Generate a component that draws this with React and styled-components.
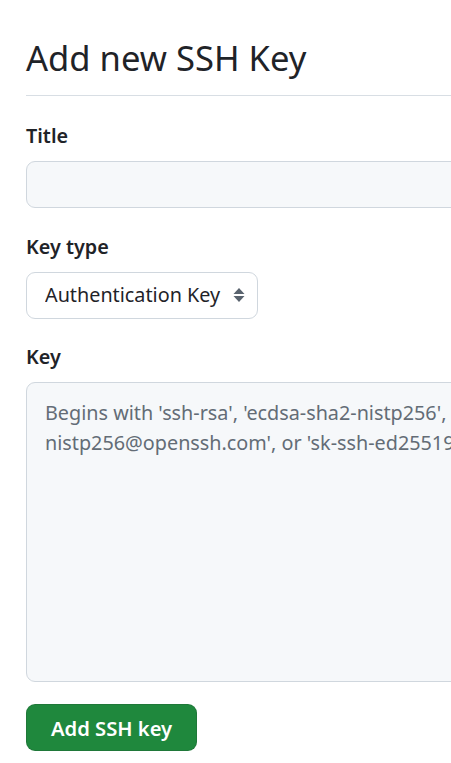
import React from "react";
import styled, { createGlobalStyle } from "styled-components";

const GlobalStyle = createGlobalStyle`
  html, body {
    margin: 0;
    padding: 0;
    background: #fff;
    overflow: hidden;
  }
  body {
    font-family: "Noto Sans", "Open Sans", sans-serif;
    color: #1f2328;
  }
`;

const Page = styled.div`
  width: 980px;
  padding: 31px 0 0 26px;
`;

const Heading = styled.h2`
  margin: 0 0 25px;
  padding-bottom: 10px;
  font-size: 34.6px;
  line-height: 54px;
  font-weight: 400;
  border-bottom: 1px solid #d8dee4;
`;

const Form = styled.form`
  display: flex;
  flex-direction: column;
  align-items: flex-start;
`;

const Group = styled.div`
  display: flex;
  flex-direction: column;
  align-items: flex-start;
  align-self: stretch;
  margin-bottom: ${(p) => p.gap || 23.5}px;
`;

const Label = styled.label`
  font-size: 19.8px;
  line-height: 30px;
  font-weight: 600;
  margin-bottom: 10px;
`;

const fieldBase = `
  box-sizing: border-box;
  font-family: "Noto Sans", "Open Sans", sans-serif;
  font-size: 19.8px;
  line-height: 30px;
  color: #1f2328;
  border: 1px solid #d0d7de;
  border-radius: 9px;
  outline: none;
`;

const TextInput = styled.input`
  ${fieldBase}
  width: 100%;
  height: 47px;
  padding: 0 18px;
  background: #f6f8fa;
`;

const SelectWrap = styled.div`
  position: relative;
  display: inline-flex;
`;

const Select = styled.select`
  ${fieldBase}
  appearance: none;
  width: 232px;
  height: 47px;
  padding: 0 30px 0 18px;
  background: #fff;
`;

const Arrow = styled.svg`
  position: absolute;
  right: 13px;
  top: 50%;
  transform: translateY(-50%);
  pointer-events: none;
`;

const TextArea = styled.textarea`
  ${fieldBase}
  width: 100%;
  height: 300px;
  padding: 15px 18px;
  background: #f6f8fa;
  resize: none;
  white-space: pre;
  overflow: hidden;
  &::placeholder {
    color: #636c76;
  }
`;

const Button = styled.button`
  box-sizing: border-box;
  height: 47px;
  padding: 0 24px;
  font-family: "Noto Sans", "Open Sans", sans-serif;
  font-size: 20.2px;
  font-weight: 600;
  color: #fff;
  background: #1f883d;
  border: 1px solid rgba(31, 35, 40, 0.15);
  border-radius: 9px;
  cursor: pointer;
`;

const placeholder =
  "Begins with 'ssh-rsa', 'ecdsa-sha2-nistp256', 'ecdsa-sha2-nistp384', 'ecdsa-sha2-nistp521', 'ssh-ed25519', 'sk-ecdsa-sha2-\nnistp256@openssh.com', or 'sk-ssh-ed25519@openssh.com'";

export default function App() {
  return (
    <Page>
      <GlobalStyle />
      <Heading>Add new SSH Key</Heading>
      <Form onSubmit={(e) => e.preventDefault()}>
        <Group>
          <Label htmlFor="title">Title</Label>
          <TextInput id="title" type="text" />
        </Group>
        <Group>
          <Label htmlFor="type">Key type</Label>
          <SelectWrap>
            <Select id="type" defaultValue="auth">
              <option value="auth">Authentication Key</option>
              <option value="signing">Signing Key</option>
            </Select>
            <Arrow width="12" height="15" viewBox="0 0 12 15" fill="#59636e">
              <path d="M6 0.5 L11.5 6.5 H0.5 Z" />
              <path d="M6 14.5 L11.5 8.5 H0.5 Z" />
            </Arrow>
          </SelectWrap>
        </Group>
        <Group gap={22}>
          <Label htmlFor="key">Key</Label>
          <TextArea id="key" placeholder={placeholder} wrap="off" />
        </Group>
        <Button type="submit">Add SSH key</Button>
      </Form>
    </Page>
  );
}
